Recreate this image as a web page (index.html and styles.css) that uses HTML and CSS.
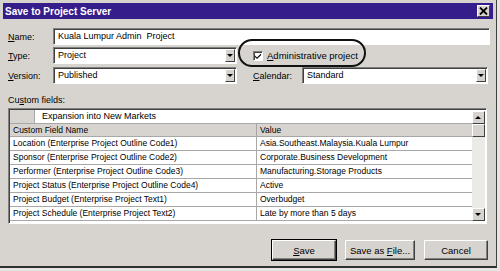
FILE: index.html
```html
<!DOCTYPE html>
<html lang="en">
<head>
    <meta charset="UTF-8">
    <title>Save to Project Server</title>
    <link rel="stylesheet" href="styles.css">
</head>
<body>

    <div class="window">
        <div class="titlebar">
            <span class="title">Save to Project Server</span>
            <span class="close-btn">
                <svg width="9" height="8" viewBox="0 0 9 8"><path d="M1 0.5 L8 7.5 M8 0.5 L1 7.5" stroke="#000" stroke-width="1.8"/></svg>
            </span>
        </div>

        <div class="row row-name">
            <span class="lbl"><span class="key">N</span>ame:</span>
            <div class="field field-name">Kuala Lumpur Admin&nbsp; Project</div>
        </div>

        <div class="row row-type">
            <span class="lbl"><span class="key">T</span>ype:</span>
            <div class="field field-combo">Project<span class="drop"></span></div>
            <div class="check">
                <span class="box">
                    <svg width="8" height="8" viewBox="0 0 8 8"><path d="M1 3.5 L3 5.5 L7 1.5 L7 3.2 L3 7 L1 5 Z" fill="#000"/></svg>
                </span>
                <span><span class="key">A</span>dministrative project</span>
            </div>
        </div>

        <div class="row row-version">
            <span class="lbl"><span class="key">V</span>ersion:</span>
            <div class="field field-combo">Published<span class="drop"></span></div>
            <span class="lbl lbl-cal"><span class="key">C</span>alendar:</span>
            <div class="field field-cal">Standard<span class="drop"></span></div>
        </div>

        <div class="custom-label">Cu<span class="key">s</span>tom fields:</div>

        <div class="grid">
            <div class="grid-body">
                <div class="grow grow-top">
                    <span class="stub"></span>
                    <span class="edit-cell">Expansion into New Markets</span>
                </div>
                <div class="grow grow-head">
                    <span class="c1">Custom Field Name</span>
                    <span class="c2">Value</span>
                </div>
                <div class="grow">
                    <span class="c1">Location (Enterprise Project Outline Code1)</span>
                    <span class="c2">Asia.Southeast.Malaysia.Kuala Lumpur</span>
                </div>
                <div class="grow">
                    <span class="c1">Sponsor (Enterprise Project Outline Code2)</span>
                    <span class="c2">Corporate.Business Development</span>
                </div>
                <div class="grow">
                    <span class="c1">Performer (Enterprise Project Outline Code3)</span>
                    <span class="c2">Manufacturing.Storage Products</span>
                </div>
                <div class="grow">
                    <span class="c1">Project Status (Enterprise Project Outline Code4)</span>
                    <span class="c2">Active</span>
                </div>
                <div class="grow">
                    <span class="c1">Project Budget (Enterprise Project Text1)</span>
                    <span class="c2">Overbudget</span>
                </div>
                <div class="grow">
                    <span class="c1">Project Schedule (Enterprise Project Text2)</span>
                    <span class="c2">Late by more than 5 days</span>
                </div>
            </div>
            <div class="scrollbar">
                <span class="sb-btn"><i class="arrow-up"></i></span>
                <span class="sb-thumb"></span>
                <span class="sb-track"></span>
                <span class="sb-btn"><i class="arrow-down"></i></span>
            </div>
        </div>

        <div class="buttons">
            <button class="btn btn-default"><span class="key">S</span>ave</button>
            <button class="btn btn-file">Save as <span class="key">F</span>ile...</button>
            <button class="btn">Cancel</button>
        </div>

        <div class="highlight"></div>
    </div>

</body>
</html>
```

FILE: styles.css
```css
body {
    margin: 0;
    padding: 0;
    background-color: #e6e4e0;
    font-family: "Liberation Sans", Arial, sans-serif;
    font-size: 9px;
    color: #000;
}
.window {
    position: relative;
    width: 497px;
    height: 268px;
    box-sizing: border-box;
    background-color: #d7d4cf;
    border-right: 1px solid #404040;
    border-bottom: 2px solid #303030;
    padding: 3px 0 0 3px;
}
.key {
    text-decoration: underline;
    text-decoration-thickness: 1px;
    text-underline-offset: 1px;
}
.titlebar {
    display: flex;
    align-items: center;
    justify-content: space-between;
    height: 16px;
    margin-right: 3px;
    padding: 0 3px 0 2px;
    background-color: #361d8c;
    color: #fff;
}
.title {
    font-weight: bold;
    font-size: 10px;
}
.close-btn {
    display: flex;
    align-items: center;
    justify-content: center;
    width: 11px;
    height: 10px;
    background: #d7d4cf;
    border: 1px solid;
    border-color: #fff #404040 #404040 #fff;
}
.row {
    display: flex;
    align-items: center;
    height: 17px;
}
.row-name {
    margin-top: 9px;
}
.row-type {
    margin-top: 2px;
}
.row-version {
    margin-top: 3px;
}
.lbl {
    width: 45px;
    padding-left: 5px;
}
.field {
    position: relative;
    box-sizing: border-box;
    height: 17px;
    line-height: 14px;
    padding-left: 4px;
    background: #fff;
    border: 1px solid;
    border-color: #808080 #fff #fff #808080;
    box-shadow: inset 1px 1px #404040;
}
.field-name {
    width: 437px;
}
.field-combo {
    width: 184px;
}
.lbl-cal {
    width: 49px;
    padding-left: 16px;
}
.field-cal {
    width: 186px;
}
.drop {
    position: absolute;
    right: 1px;
    top: 1px;
    width: 10px;
    height: 13px;
    box-sizing: border-box;
    background: #d7d4cf;
    border: 1px solid;
    border-color: #fff #404040 #404040 #fff;
}
.drop::after {
    content: "";
    position: absolute;
    left: 1px;
    top: 4px;
    border-left: 3px solid transparent;
    border-right: 3px solid transparent;
    border-top: 3px solid #000;
}
.check {
    display: flex;
    align-items: center;
    gap: 4px;
    margin-left: 16px;
    font-size: 9.5px;
}
.box {
    display: flex;
    align-items: center;
    justify-content: center;
    width: 10px;
    height: 10px;
    box-sizing: border-box;
    background: #fff;
    border: 1px solid;
    border-color: #808080 #fff #fff #808080;
    box-shadow: inset 1px 1px #404040;
}
.custom-label {
    margin-top: 11px;
    padding-left: 5px;
    height: 12px;
}
.grid {
    display: flex;
    width: 479px;
    height: 116px;
    margin: 1px 0 0 5px;
    box-sizing: border-box;
    border: 1px solid;
    border-color: #808080 #fff #fff #808080;
    box-shadow: inset 1px 1px #404040;
    background: #fff;
    overflow: hidden;
    font-size: 8.5px;
}
.grid-body {
    flex: 1;
    padding: 1px 0 0 1px;
}
.grow {
    display: flex;
    height: 14px;
    line-height: 13px;
    border-bottom: 1px solid #a8a8a8;
    box-sizing: border-box;
}
.grow-top {
    height: 13px;
    border-bottom: none;
}
.stub {
    width: 24px;
    background: #d7d4cf;
    border-right: 1px solid #a8a8a8;
}
.edit-cell {
    padding-left: 7px;
    font-size: 9px;
}
.grow-head {
    background: #d7d4cf;
    border-top: 1px solid #a8a8a8;
}
.c1 {
    width: 243px;
    padding-left: 3px;
    border-right: 1px solid #a8a8a8;
}
.c2 {
    padding-left: 3px;
}
.scrollbar {
    display: flex;
    flex-direction: column;
    width: 13px;
    padding: 2px 1px 2px 0;
}
.sb-btn, .sb-thumb {
    position: relative;
    height: 13px;
    box-sizing: border-box;
    background: #d7d4cf;
    border: 1px solid;
    border-color: #fff #404040 #404040 #fff;
}
.sb-track {
    flex: 1;
    background: #eceae6;
}
.arrow-up, .arrow-down {
    position: absolute;
    left: 2px;
    top: 4px;
    border-left: 3px solid transparent;
    border-right: 3px solid transparent;
}
.arrow-up {
    border-bottom: 3px solid #000;
}
.arrow-down {
    border-top: 3px solid #000;
}
.buttons {
    display: flex;
    justify-content: flex-end;
    gap: 9px;
    margin: 16px 8px 0 0;
}
.btn {
    height: 20px;
    width: 64px;
    padding: 0;
    font-family: inherit;
    font-size: 9.5px;
    color: #000;
    background: #d7d4cf;
    border: 1px solid;
    border-color: #fff #404040 #404040 #fff;
    box-shadow: inset -1px -1px #808080;
}
.btn-default {
    outline: 1px solid #000;
}
.btn-file {
    width: 70px;
}
.highlight {
    position: absolute;
    left: 238px;
    top: 39px;
    width: 124px;
    height: 24px;
    border: 2px solid #111;
    border-radius: 14px;
}
```
